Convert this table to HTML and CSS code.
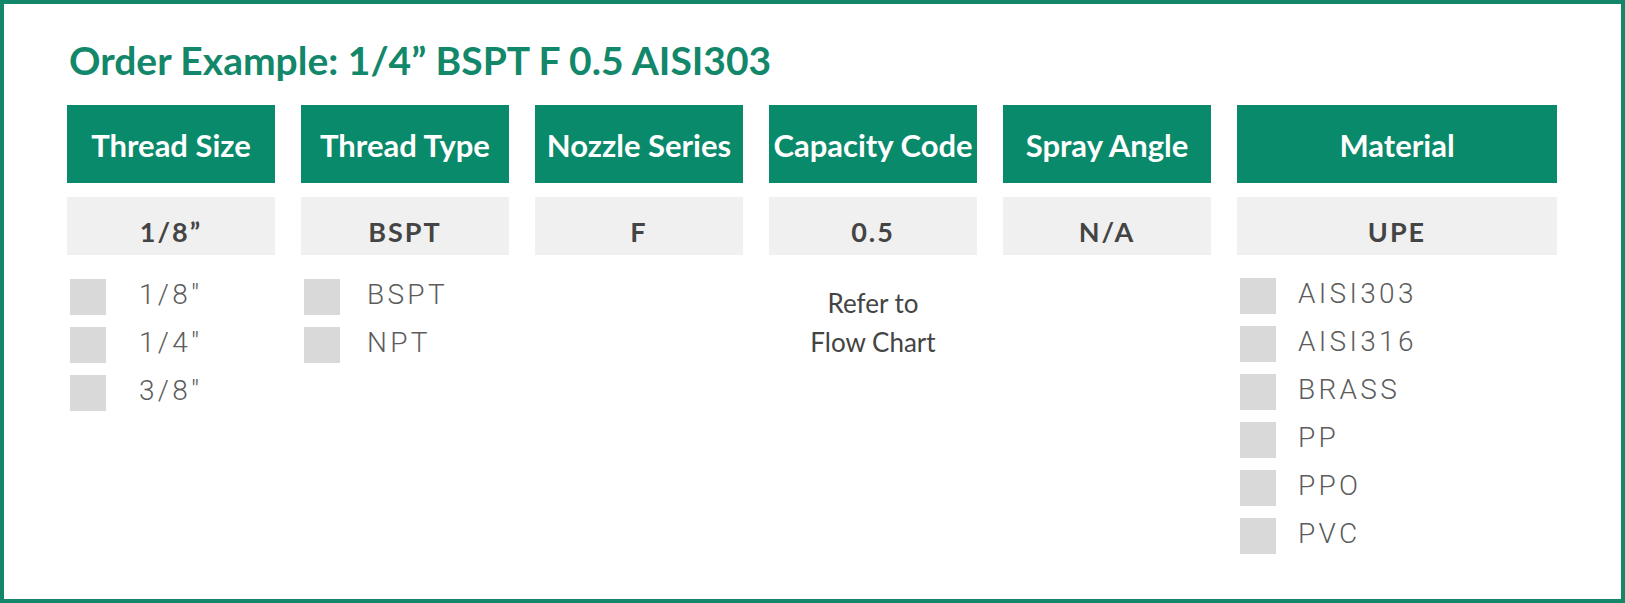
FILE: index.html
```html
<!DOCTYPE html>
<html lang="en">
<head>
<meta charset="utf-8">
<title>Order Example</title>
<link rel="stylesheet" href="styles.css">
</head>
<body>
<div class="frame">
  <h1 class="title">Order Example: 1/4” BSPT F 0.5 AISI303</h1>
  <div class="grid">
    <div class="col">
      <div class="head">Thread Size</div>
      <div class="value">1/8”</div>
      <ul class="opts opts-a">
        <li><span class="box"></span><span class="lbl">1/8″</span></li>
        <li><span class="box"></span><span class="lbl">1/4″</span></li>
        <li><span class="box"></span><span class="lbl">3/8″</span></li>
      </ul>
    </div>
    <div class="col">
      <div class="head">Thread Type</div>
      <div class="value">BSPT</div>
      <ul class="opts opts-b">
        <li><span class="box"></span><span class="lbl">BSPT</span></li>
        <li><span class="box"></span><span class="lbl">NPT</span></li>
      </ul>
    </div>
    <div class="col">
      <div class="head">Nozzle Series</div>
      <div class="value">F</div>
    </div>
    <div class="col">
      <div class="head">Capacity Code</div>
      <div class="value">0.5</div>
      <p class="note">Refer to<br>Flow Chart</p>
    </div>
    <div class="col">
      <div class="head">Spray Angle</div>
      <div class="value">N/A</div>
    </div>
    <div class="col">
      <div class="head">Material</div>
      <div class="value">UPE</div>
      <ul class="opts opts-c">
        <li><span class="box"></span><span class="lbl">AISI303</span></li>
        <li><span class="box"></span><span class="lbl">AISI316</span></li>
        <li><span class="box"></span><span class="lbl">BRASS</span></li>
        <li><span class="box"></span><span class="lbl">PP</span></li>
        <li><span class="box"></span><span class="lbl">PPO</span></li>
        <li><span class="box"></span><span class="lbl">PVC</span></li>
      </ul>
    </div>
  </div>
</div>
</body>
</html>
```

FILE: styles.css
```css
* { box-sizing: border-box; }
html, body { margin: 0; padding: 0; background: #fff; }
.frame {
  width: 1625px;
  height: 603px;
  border: 4px solid #14876a;
  padding: 0 63px;
  font-family: Lato, "Noto Sans", sans-serif;
}
.title {
  margin: 0;
  padding: 33px 0 0 2px;
  height: 101px;
  font-size: 39px;
  line-height: 46px;
  font-weight: 700;
  color: #12876a;
  white-space: nowrap;
}
.grid {
  display: grid;
  grid-template-columns: repeat(5, 208px) 320px;
  column-gap: 26px;
  align-items: start;
}
.head {
  height: 78px;
  background: #098a6a;
  color: #fff;
  font-weight: 700;
  font-size: 31px;
  display: flex;
  align-items: center;
  justify-content: center;
  padding-top: 1px;
  white-space: nowrap;
}
.value {
  margin-top: 14px;
  height: 58px;
  background: #f0f0f0;
  color: #444;
  font-weight: 700;
  font-size: 27px;
  letter-spacing: 2px;
  display: flex;
  align-items: center;
  justify-content: center;
  padding-top: 10px;
}
.opts {
  list-style: none;
  margin: 24px 0 0;
  padding: 0 0 0 3px;
  display: flex;
  flex-direction: column;
  gap: 12px;
}
.opts-c { margin-top: 23px; }
.opts li {
  display: flex;
  align-items: center;
  height: 36px;
  font-family: Roboto, "Liberation Sans", sans-serif;
  font-weight: 300;
  font-size: 28px;
  letter-spacing: 3.3px;
  color: #5c5c5c;
}
.lbl { margin-top: -5px; }
.box {
  width: 36px;
  height: 36px;
  background: #d9d9d9;
  flex: none;
}
.opts-a .box { margin-right: 33px; }
.opts-b .box { margin-right: 27px; }
.opts-c .box { margin-right: 22px; }
.note {
  margin: 29px 0 0;
  text-align: center;
  font-size: 26px;
  line-height: 39px;
  color: #444;
}
```
